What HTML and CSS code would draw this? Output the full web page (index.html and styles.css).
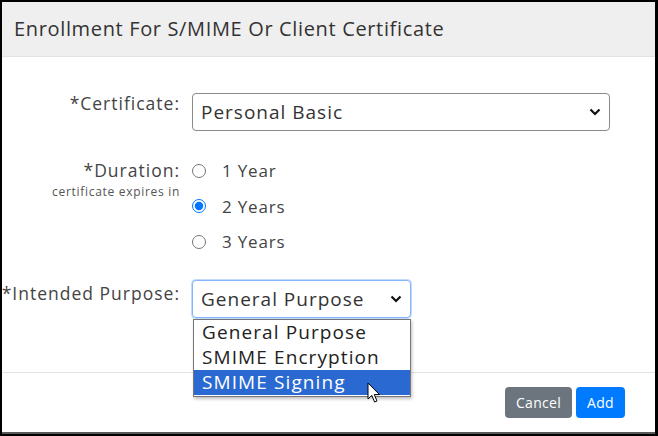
FILE: index.html
```html
<!DOCTYPE html>
<html>
<head>
<meta charset="utf-8">
<link rel="stylesheet" href="styles.css">
</head>
<body>
<div class="modal">
  <div class="modal-header">Enrollment For S/MIME Or Client Certificate</div>
  <div class="modal-body">
    <div class="row row-cert">
      <div class="label"><span>*Certificate:</span></div>
      <div class="field">
        <div class="select select-wide">
          <span>Personal Basic</span>
          <svg class="chev" width="12" height="8" viewBox="0 0 12 8"><path d="M1.5 1.5 L6 6 L10.5 1.5" fill="none" stroke="#111" stroke-width="2.2"/></svg>
        </div>
      </div>
    </div>
    <div class="row row-dur">
      <div class="label-stack">
        <div class="label-main">*Duration:</div>
        <div class="label-sub">certificate expires in</div>
      </div>
      <div class="field radios">
        <label class="radio"><input type="radio" name="d"><span>1 Year</span></label>
        <label class="radio"><input type="radio" name="d" checked><span>2 Years</span></label>
        <label class="radio"><input type="radio" name="d"><span>3 Years</span></label>
      </div>
    </div>
    <div class="row row-purpose">
      <div class="label"><span>*Intended Purpose:</span></div>
      <div class="field">
        <div class="dropdown">
          <div class="select select-focus">
            <span>General Purpose</span>
            <svg class="chev" width="12" height="8" viewBox="0 0 12 8"><path d="M1.5 1.5 L6 6 L10.5 1.5" fill="none" stroke="#111" stroke-width="2.2"/></svg>
          </div>
          <div class="menu">
            <div class="opt">General Purpose</div>
            <div class="opt">SMIME Encryption</div>
            <div class="opt opt-sel">SMIME Signing</div>
          </div>
          <svg class="cursor" width="14" height="22" viewBox="0 0 14 22"><path d="M1 1 L1 17 L4.8 13.4 L7.6 20 L10 19 L7.3 12.6 L12.5 12.6 Z" fill="#fff" stroke="#000" stroke-width="1" stroke-linejoin="round"/></svg>
        </div>
      </div>
    </div>
  </div>
  <div class="modal-footer">
    <button class="btn btn-cancel">Cancel</button>
    <button class="btn btn-add">Add</button>
  </div>
</div>
</body>
</html>
```
FILE: styles.css
```css
html, body {
  margin: 0;
  padding: 0;
  background: #000;
  width: 658px;
  height: 436px;
  overflow: hidden;
}
body {
  font-family: "Open Sans", "Noto Sans", sans-serif;
  color: #333;
}
.modal {
  margin: 2px 0 0 2px;
  width: 653px;
  height: 430px;
  background: #fff;
  border-bottom: 2px solid #5a5a5a;
  display: flex;
  flex-direction: column;
}
.modal-header {
  height: 55px;
  box-sizing: border-box;
  background: #efefef;
  border-bottom: 1px solid #e2e2e2;
  padding-left: 12px;
  padding-bottom: 2px;
  display: flex;
  align-items: center;
  font-size: 20px;
  letter-spacing: 0.65px;
  color: #333;
}
.modal-body {
  padding-top: 36px;
  height: 316px;
  box-sizing: border-box;
  border-bottom: 1px solid #e2e2e2;
}
.row {
  display: flex;
}
.label {
  width: 178px;
  display: flex;
  justify-content: flex-end;
  align-items: flex-start;
  white-space: nowrap;
  font-size: 17.5px;
  letter-spacing: 1px;
  color: #444;
  flex: none;
}
.label-stack {
  width: 178px;
  flex: none;
  display: block;
  text-align: right;
  white-space: nowrap;
  color: #444;
}
.field {
  margin-left: 12px;
}
.row-cert .label {
  line-height: 20px;
}
.select {
  box-sizing: border-box;
  height: 38px;
  border: 1px solid #8a8a8a;
  border-radius: 4px;
  display: flex;
  align-items: center;
  justify-content: space-between;
  padding: 0 8px 0 8px;
  font-size: 19px;
  letter-spacing: 1px;
  color: #333;
  background: #fff;
}
.select-wide {
  width: 418px;
}
.chev {
  flex: none;
}
.row-dur {
  margin-top: 22px;
}
.label-main {
  font-size: 17.5px;
  letter-spacing: 1px;
  line-height: 35px;
}
.label-sub {
  font-size: 12px;
  letter-spacing: 0.7px;
  line-height: 16px;
  color: #555;
  margin-top: -4px;
}
.radios {
  display: flex;
  flex-direction: column;
}
.radio {
  display: flex;
  align-items: center;
  height: 35.5px;
  font-size: 17px;
  letter-spacing: 0.8px;
  color: #444;
}
.radio input {
  margin: 0 16px 0 0;
  width: 14px;
  height: 14px;
}
.row-purpose {
  margin-top: 20px;
}
.row-purpose .label {
  line-height: 26px;
}
.dropdown {
  position: relative;
  width: 219px;
}
.select-focus {
  border-color: #86b7fe;
  box-shadow: 0 0 0 1px rgba(13,110,253,0.25);
}
.menu {
  position: absolute;
  left: 1px;
  top: 39px;
  width: 218px;
  box-sizing: border-box;
  border: 1px solid #767676;
  background: #fff;
  box-shadow: 1px 2px 3px rgba(0,0,0,0.25);
  padding-bottom: 1px;
}
.opt {
  height: 25px;
  line-height: 25px;
  padding-left: 8px;
  font-size: 19px;
  letter-spacing: 1.1px;
  color: #222;
  white-space: nowrap;
}
.opt-sel {
  background: #2a69d2;
  color: #fff;
}
.cursor {
  position: absolute;
  left: 175px;
  top: 102px;
}
.modal-footer {
  flex: 1;
  display: flex;
  justify-content: flex-end;
  align-items: flex-start;
  padding: 14px 30px 0 0;
  gap: 4px;
}
.btn {
  font-family: inherit;
  border: none;
  border-radius: 4px;
  color: #fff;
  font-size: 14px;
  letter-spacing: 0.3px;
  height: 31px;
  padding: 0 8px;
}
.btn-cancel {
  background: #6c757d;
  width: 67px;
}
.btn-add {
  background: #007bff;
  width: 49px;
}
```
